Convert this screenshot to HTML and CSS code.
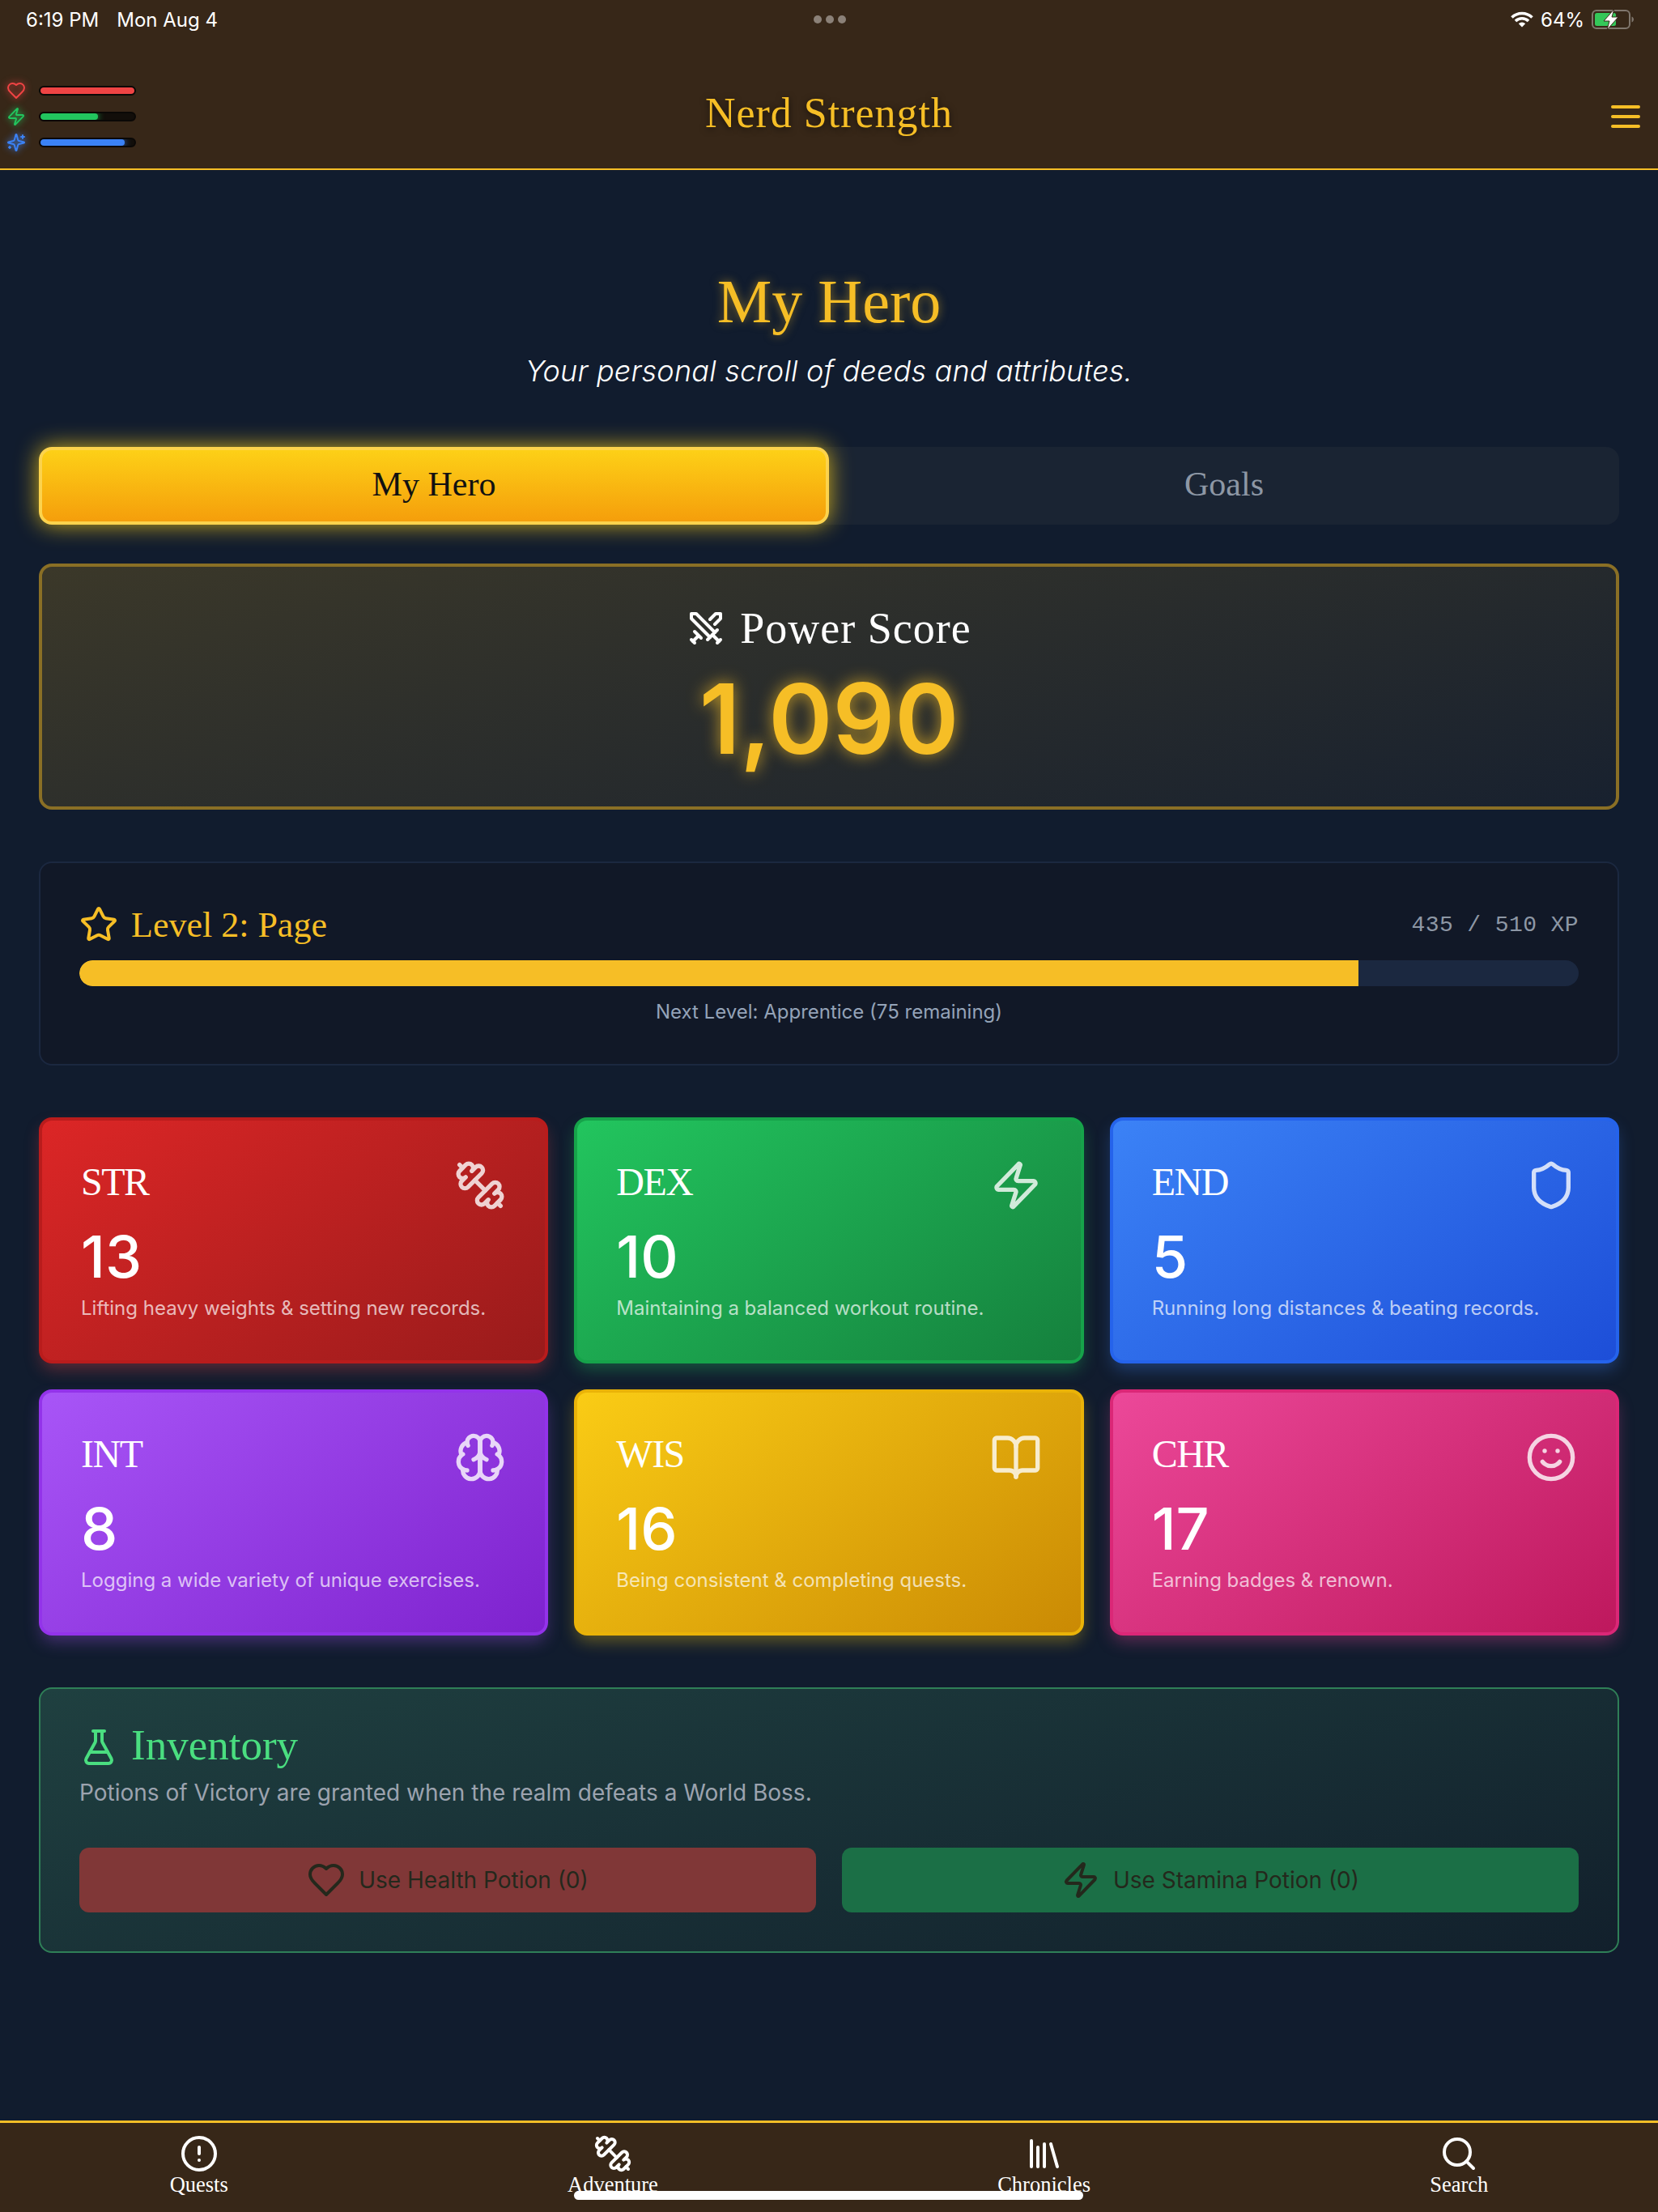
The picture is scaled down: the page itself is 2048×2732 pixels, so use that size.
FILE: index.html
```html
<!DOCTYPE html>
<html lang="en">
<head>
    <meta charset="UTF-8">
    <meta name="viewport" content="width=device-width, initial-scale=1.0">
    <title>Nerd Strength - My Hero</title>
    <link rel="stylesheet" href="styles.css">
</head>
<body>
<svg class="icon-defs" xmlns="http://www.w3.org/2000/svg">
    <symbol id="i-dumbbell" viewBox="0 0 24 24"><path d="M14.4 14.4 9.6 9.6"/><path d="M18.657 21.485a2 2 0 1 1-2.829-2.828l-1.767 1.768a2 2 0 1 1-2.829-2.829l6.364-6.364a2 2 0 1 1 2.829 2.829l-1.768 1.767a2 2 0 1 1 2.828 2.829z"/><path d="m21.5 21.5-1.4-1.4"/><path d="M3.9 3.9 2.5 2.5"/><path d="M6.404 12.768a2 2 0 1 1-2.829-2.829l1.768-1.767a2 2 0 1 1-2.828-2.829l2.828-2.828a2 2 0 1 1 2.829 2.828l1.767-1.768a2 2 0 1 1 2.829 2.829z"/></symbol>
    <symbol id="i-zap" viewBox="0 0 24 24"><path d="M4 14a1 1 0 0 1-.78-1.63l9.9-10.2a.5.5 0 0 1 .86.46l-1.92 6.02A1 1 0 0 0 13 10h7a1 1 0 0 1 .78 1.63l-9.9 10.2a.5.5 0 0 1-.86-.46l1.92-6.02A1 1 0 0 0 11 14z"/></symbol>
    <symbol id="i-shield" viewBox="0 0 24 24"><path d="M20 13c0 5-3.5 7.5-7.66 8.95a1 1 0 0 1-.67-.01C7.5 20.5 4 18 4 13V6a1 1 0 0 1 1-1c2 0 4.5-1.2 6.24-2.72a1.17 1.17 0 0 1 1.52 0C14.51 3.81 17 5 19 5a1 1 0 0 1 1 1z"/></symbol>
    <symbol id="i-brain" viewBox="0 0 24 24"><path d="M12 5a3 3 0 1 0-5.997.125 4 4 0 0 0-2.526 5.77 4 4 0 0 0 .556 6.588A4 4 0 1 0 12 18Z"/><path d="M12 5a3 3 0 1 1 5.997.125 4 4 0 0 1 2.526 5.77 4 4 0 0 1-.556 6.588A4 4 0 1 1 12 18Z"/><path d="M15 13a4.5 4.5 0 0 1-3-4 4.5 4.5 0 0 1-3 4"/><path d="M12 18V5"/><path d="M17.599 6.5a3 3 0 0 0 .399-1.375"/><path d="M6.003 5.125A3 3 0 0 0 6.401 6.5"/><path d="M3.477 10.896a4 4 0 0 1 .585-.396"/><path d="M19.938 10.5a4 4 0 0 1 .585.396"/><path d="M6 18a4 4 0 0 1-1.967-.516"/><path d="M19.967 17.484A4 4 0 0 1 18 18"/></symbol>
    <symbol id="i-book" viewBox="0 0 24 24"><path d="M12 7v14"/><path d="M3 18a1 1 0 0 1-1-1V4a1 1 0 0 1 1-1h5a4 4 0 0 1 4 4 4 4 0 0 1 4-4h5a1 1 0 0 1 1 1v13a1 1 0 0 1-1 1h-6a3 3 0 0 0-3 3 3 3 0 0 0-3-3z"/></symbol>
    <symbol id="i-smile" viewBox="0 0 24 24"><circle cx="12" cy="12" r="10"/><path d="M8 14s1.5 2 4 2 4-2 4-2"/><line x1="9" x2="9.01" y1="9" y2="9"/><line x1="15" x2="15.01" y1="9" y2="9"/></symbol>
    <symbol id="i-heart" viewBox="0 0 24 24"><path d="M19 14c1.49-1.46 3-3.21 3-5.5A5.5 5.5 0 0 0 16.5 3c-1.76 0-3 .5-4.5 2-1.5-1.5-2.74-2-4.5-2A5.5 5.5 0 0 0 2 8.5c0 2.3 1.5 4.05 3 5.5l7 7Z"/></symbol>
    <symbol id="i-sparkles" viewBox="0 0 24 24"><path d="M9.937 15.5A2 2 0 0 0 8.5 14.063l-6.135-1.582a.5.5 0 0 1 0-.962L8.5 9.936A2 2 0 0 0 9.937 8.5l1.582-6.135a.5.5 0 0 1 .963 0L14.063 8.5A2 2 0 0 0 15.5 9.937l6.135 1.581a.5.5 0 0 1 0 .964L15.5 14.063a2 2 0 0 0-1.437 1.437l-1.582 6.135a.5.5 0 0 1-.963 0z"/><path d="M20 3v4"/><path d="M22 5h-4"/><path d="M4 17v2"/><path d="M5 18H3"/></symbol>
    <symbol id="i-star" viewBox="0 0 24 24"><path d="M11.525 2.295a.53.53 0 0 1 .95 0l2.31 4.679a2.123 2.123 0 0 0 1.595 1.16l5.166.756a.53.53 0 0 1 .294.904l-3.736 3.638a2.123 2.123 0 0 0-.611 1.878l.882 5.14a.53.53 0 0 1-.771.56l-4.618-2.428a2.122 2.122 0 0 0-1.973 0L6.396 21.01a.53.53 0 0 1-.77-.56l.881-5.139a2.122 2.122 0 0 0-.611-1.879L2.16 9.795a.53.53 0 0 1 .294-.906l5.165-.755a2.122 2.122 0 0 0 1.597-1.16z"/></symbol>
    <symbol id="i-swords" viewBox="0 0 24 24"><polyline points="14.5 17.5 3 6 3 3 6 3 17.5 14.5"/><line x1="13" x2="19" y1="19" y2="13"/><line x1="16" x2="20" y1="16" y2="20"/><line x1="19" x2="21" y1="21" y2="19"/><polyline points="14.5 6.5 18 3 21 3 21 6 17.5 9.5"/><line x1="5" x2="9" y1="14" y2="18"/><line x1="7" x2="4" y1="17" y2="20"/><line x1="3" x2="5" y1="19" y2="21"/></symbol>
    <symbol id="i-flask" viewBox="0 0 24 24"><path d="M14 2v6a2 2 0 0 0 .245.96l5.51 10.08A2 2 0 0 1 18 22H6a2 2 0 0 1-1.755-2.96l5.51-10.08A2 2 0 0 0 10 8V2"/><path d="M6.453 15h11.094"/><path d="M8.5 2h7"/></symbol>
    <symbol id="i-alert" viewBox="0 0 24 24"><circle cx="12" cy="12" r="10"/><line x1="12" x2="12" y1="8" y2="12"/><line x1="12" x2="12.01" y1="16" y2="16"/></symbol>
    <symbol id="i-library" viewBox="0 0 24 24"><path d="m16 6 4 14"/><path d="M12 6v14"/><path d="M8 8v12"/><path d="M4 4v16"/></symbol>
    <symbol id="i-search" viewBox="0 0 24 24"><path d="m21 21-4.34-4.34"/><circle cx="11" cy="11" r="8"/></symbol>
    <symbol id="i-menu" viewBox="0 0 24 24"><path d="M4 6h16"/><path d="M4 12h16"/><path d="M4 18h16"/></symbol>
</svg>

<header class="top-header">
    <div class="status-bar">
        <div class="status-time"><span>6:19 PM</span><span>Mon Aug 4</span></div>
        <div class="status-dots"><i></i><i></i><i></i></div>
        <div class="status-right">
            <svg class="wifi" viewBox="0 0 28 20"><path d="M1.5 7.5a18 18 0 0 1 25 0M6 12a11.5 11.5 0 0 1 16 0"/><path class="wifi-dot" d="M14 19.5 9.8 15.3a6 6 0 0 1 8.4 0z"/></svg>
            <span>64%</span>
            <svg class="battery" viewBox="0 0 52 24">
                <rect class="battery-shell" x="1" y="1" width="46" height="22" rx="5"/>
                <rect class="battery-level" x="4" y="4" width="26" height="16" rx="2.5"/>
                <path class="battery-cap" d="M49.5 8.5c1.6.6 2.5 2 2.5 3.5s-.9 2.9-2.5 3.5z"/>
                <path class="battery-bolt" d="M28 -1 15 14h7l-3 11 14-16h-8z"/>
            </svg>
        </div>
    </div>
    <div class="header-row">
        <div class="vitals">
            <div class="vital vital-hp"><svg class="icon"><use href="#i-heart"/></svg><div class="vital-bar"><div class="vital-fill" style="width: 100%"></div></div></div>
            <div class="vital vital-sta"><svg class="icon"><use href="#i-zap"/></svg><div class="vital-bar"><div class="vital-fill" style="width: 61%"></div></div></div>
            <div class="vital vital-mana"><svg class="icon"><use href="#i-sparkles"/></svg><div class="vital-bar"><div class="vital-fill" style="width: 90%"></div></div></div>
        </div>
        <h1 class="app-title">Nerd Strength</h1>
        <button class="menu-btn"><svg class="icon"><use href="#i-menu"/></svg></button>
    </div>
</header>

<main class="page">
    <h2 class="page-title">My Hero</h2>
    <p class="page-sub">Your personal scroll of deeds and attributes.</p>

    <div class="tabs">
        <button class="tab tab-active">My Hero</button>
        <button class="tab">Goals</button>
    </div>

    <section class="power-card">
        <h3 class="power-title"><svg class="icon"><use href="#i-swords"/></svg>Power Score</h3>
        <div class="power-value">1,090</div>
    </section>

    <section class="level-card">
        <div class="level-head">
            <h3 class="level-title"><svg class="icon"><use href="#i-star"/></svg>Level 2: Page</h3>
            <span class="level-xp">435 / 510 XP</span>
        </div>
        <div class="level-track"><div class="level-fill" style="width: 85.3%"></div></div>
        <p class="level-next">Next Level: Apprentice (75 remaining)</p>
    </section>

    <section class="stats">
        <div class="stat stat-str">
            <div class="stat-head"><span class="stat-name">STR</span><svg class="icon"><use href="#i-dumbbell"/></svg></div>
            <div class="stat-value">13</div>
            <p class="stat-desc">Lifting heavy weights &amp; setting new records.</p>
        </div>
        <div class="stat stat-dex">
            <div class="stat-head"><span class="stat-name">DEX</span><svg class="icon"><use href="#i-zap"/></svg></div>
            <div class="stat-value">10</div>
            <p class="stat-desc">Maintaining a balanced workout routine.</p>
        </div>
        <div class="stat stat-end">
            <div class="stat-head"><span class="stat-name">END</span><svg class="icon"><use href="#i-shield"/></svg></div>
            <div class="stat-value">5</div>
            <p class="stat-desc">Running long distances &amp; beating records.</p>
        </div>
        <div class="stat stat-int">
            <div class="stat-head"><span class="stat-name">INT</span><svg class="icon"><use href="#i-brain"/></svg></div>
            <div class="stat-value">8</div>
            <p class="stat-desc">Logging a wide variety of unique exercises.</p>
        </div>
        <div class="stat stat-wis">
            <div class="stat-head"><span class="stat-name">WIS</span><svg class="icon"><use href="#i-book"/></svg></div>
            <div class="stat-value">16</div>
            <p class="stat-desc">Being consistent &amp; completing quests.</p>
        </div>
        <div class="stat stat-chr">
            <div class="stat-head"><span class="stat-name">CHR</span><svg class="icon"><use href="#i-smile"/></svg></div>
            <div class="stat-value">17</div>
            <p class="stat-desc">Earning badges &amp; renown.</p>
        </div>
    </section>

    <section class="inventory">
        <h3 class="inventory-title"><svg class="icon"><use href="#i-flask"/></svg>Inventory</h3>
        <p class="inventory-text">Potions of Victory are granted when the realm defeats a World Boss.</p>
        <div class="inventory-actions">
            <button class="potion potion-health" disabled><svg class="icon"><use href="#i-heart"/></svg>Use Health Potion (0)</button>
            <button class="potion potion-stamina" disabled><svg class="icon"><use href="#i-zap"/></svg>Use Stamina Potion (0)</button>
        </div>
    </section>
</main>

<nav class="bottom-nav">
    <a class="nav-item"><svg class="icon"><use href="#i-alert"/></svg><span>Quests</span></a>
    <a class="nav-item"><svg class="icon"><use href="#i-dumbbell"/></svg><span>Adventure</span></a>
    <a class="nav-item"><svg class="icon"><use href="#i-library"/></svg><span>Chronicles</span></a>
    <a class="nav-item"><svg class="icon"><use href="#i-search"/></svg><span>Search</span></a>
    <div class="home-indicator"></div>
</nav>
</body>
</html>
```

FILE: styles.css
```css
* {
    box-sizing: border-box;
}
body {
    margin: 0;
    min-height: 2732px;
    display: flex;
    flex-direction: column;
    background-color: #111c2e;
    color: #fff;
    font-family: Inter, "Noto Sans", sans-serif;
}
h1, h2, h3, p {
    margin: 0;
    font-weight: 400;
}
.icon-defs {
    display: none;
}
.icon {
    width: 48px;
    height: 48px;
    flex: none;
    fill: none;
    stroke: currentColor;
    stroke-width: 2;
    stroke-linecap: round;
    stroke-linejoin: round;
}

/* header */
.top-header {
    height: 210px;
    background-color: #372718;
    border-bottom: 2px solid #f6be26;
}
.status-bar {
    height: 48px;
    padding: 0 30px 0 32px;
    display: grid;
    grid-template-columns: 1fr auto 1fr;
    align-items: center;
    font-size: 24px;
}
.status-time {
    display: flex;
    gap: 22px;
}
.status-dots {
    display: flex;
    gap: 5px;
}
.status-dots i {
    width: 10px;
    height: 10px;
    border-radius: 50%;
    background-color: #8b8178;
}
.status-right {
    display: flex;
    justify-content: flex-end;
    align-items: center;
    gap: 9px;
}
.wifi {
    width: 28px;
    height: 20px;
    fill: none;
    stroke: #fff;
    stroke-width: 3.6;
}
.wifi-dot {
    fill: #fff;
    stroke: none;
}
.battery {
    width: 52px;
    height: 24px;
    overflow: visible;
}
.battery-shell {
    fill: none;
    stroke: #7f766d;
    stroke-width: 2;
}
.battery-level {
    fill: #34c759;
}
.battery-cap {
    fill: #7f766d;
}
.battery-bolt {
    fill: #fff;
    stroke: #372718;
    stroke-width: 1;
}
.header-row {
    height: 160px;
    padding: 32px 8px 0;
    display: grid;
    grid-template-columns: 1fr auto 1fr;
    align-items: center;
}
.vitals {
    display: flex;
    flex-direction: column;
    gap: 8px;
}
.vital {
    display: flex;
    align-items: center;
    gap: 16px;
}
.vital .icon {
    width: 24px;
    height: 24px;
    filter: drop-shadow(0 0 4px currentColor);
}
.vital-bar {
    width: 120px;
    height: 12px;
    background-color: #120e0a;
    border: 2px solid #0a0806;
    border-radius: 6px;
    overflow: hidden;
}
.vital-fill {
    height: 100%;
    border-radius: 4px;
    background-color: currentColor;
    box-shadow: 0 0 8px currentColor;
}
.vital-hp { color: #ef4444; }
.vital-sta { color: #22c55e; }
.vital-mana { color: #3b82f6; }
.app-title {
    margin-top: -8px;
    font-family: "Liberation Serif", serif;
    font-size: 52px;
    line-height: 56px;
    letter-spacing: 1px;
    color: #f6be26;
    text-shadow: 0 2px 8px rgba(0, 0, 0, 0.6);
}
.menu-btn {
    justify-self: end;
    height: 48px;
    margin-right: 8px;
    padding: 0;
    background: none;
    border: none;
    color: #f6be26;
}

/* main */
.page {
    flex: 1;
    padding: 122px 48px 0;
}
.page-title {
    font-family: "Liberation Serif", serif;
    font-size: 76px;
    line-height: 80px;
    text-align: center;
    color: #f6be26;
    text-shadow: 0 0 12px rgba(246, 190, 38, 0.5);
}
.page-sub {
    margin-top: 18px;
    font-size: 36px;
    font-weight: 300;
    line-height: 56px;
    letter-spacing: 0.2px;
    font-style: italic;
    text-align: center;
}
.tabs {
    margin-top: 66px;
    display: grid;
    grid-template-columns: 1fr 1fr;
    background-color: #1a2433;
    border-radius: 16px;
}
.tab {
    height: 96px;
    padding-bottom: 6px;
    font-family: "Liberation Serif", serif;
    font-size: 42px;
    color: #8d97a5;
    background: none;
    border: none;
    border-radius: 16px;
}
.tab-active {
    color: #111;
    background: linear-gradient(180deg, #fdd017, #f59e0b);
    border: 4px solid #fcd34d;
    box-shadow: 0 0 28px rgba(253, 208, 23, 0.8);
}
.power-card {
    margin-top: 48px;
    height: 304px;
    padding: 48px;
    border: 4px solid #8a6f25;
    border-radius: 16px;
    background: linear-gradient(165deg, #3b3829, #18212f);
    text-align: center;
}
.power-title {
    height: 56px;
    margin-bottom: 24px;
    display: flex;
    justify-content: center;
    align-items: center;
    gap: 18px;
    font-family: "Liberation Serif", serif;
    font-size: 54px;
    letter-spacing: 1px;
}
.power-value {
    font-size: 120px;
    line-height: 120px;
    font-weight: 600;
    color: #f6be26;
    text-shadow: 0 0 20px rgba(246, 190, 38, 0.75);
}
.level-card {
    margin-top: 64px;
    padding: 48px;
    background-color: #111827;
    border: 2px solid #1b2840;
    border-radius: 16px;
}
.level-head {
    height: 56px;
    display: flex;
    justify-content: space-between;
    align-items: center;
}
.level-title {
    display: flex;
    align-items: center;
    gap: 16px;
    font-family: "Liberation Serif", serif;
    font-size: 44px;
    color: #f6be26;
}
.level-xp {
    font-family: "Liberation Mono", monospace;
    font-size: 28px;
    letter-spacing: 0.4px;
    color: #8d97a5;
}
.level-track {
    margin-top: 16px;
    height: 32px;
    background-color: #1b2840;
    border-radius: 16px;
    overflow: hidden;
}
.level-fill {
    height: 100%;
    background-color: #f6be26;
    border-radius: 16px 0 0 16px;
}
.level-next {
    margin-top: 16px;
    font-size: 24px;
    line-height: 32px;
    text-align: center;
    color: #94a3b8;
}

/* stat cards */
.stats {
    margin-top: 64px;
    display: grid;
    grid-template-columns: repeat(3, 1fr);
    gap: 32px;
}
.stat {
    height: 304px;
    padding: 48px;
    border: 4px solid;
    border-radius: 16px;
}
.stat-head {
    height: 64px;
    display: flex;
    justify-content: space-between;
    align-items: flex-start;
}
.stat-head .icon {
    width: 64px;
    height: 64px;
    opacity: 0.8;
}
.stat-name {
    font-family: "Liberation Serif", serif;
    font-size: 48px;
    line-height: 56px;
    letter-spacing: -1.5px;
}
.stat-value {
    margin-top: 16px;
    font-size: 72px;
    line-height: 80px;
    font-weight: 500;
}
.stat-desc {
    margin-top: 8px;
    font-size: 24px;
    line-height: 32px;
    color: rgba(255, 255, 255, 0.7);
}
.stat-str { background: linear-gradient(145deg, #dc2626, #991b1b); border-color: #b91c1c; box-shadow: 0 10px 20px -3px rgba(239, 68, 68, 0.35); }
.stat-dex { background: linear-gradient(145deg, #22c55e, #15803d); border-color: #16a34a; box-shadow: 0 10px 20px -3px rgba(34, 197, 94, 0.35); }
.stat-end { background: linear-gradient(145deg, #3b82f6, #1d4ed8); border-color: #2563eb; box-shadow: 0 10px 20px -3px rgba(59, 130, 246, 0.35); }
.stat-int { background: linear-gradient(145deg, #a855f7, #7e22ce); border-color: #9333ea; box-shadow: 0 10px 20px -3px rgba(168, 85, 247, 0.35); }
.stat-wis { background: linear-gradient(145deg, #facc15, #ca8a04); border-color: #eab308; box-shadow: 0 10px 20px -3px rgba(250, 204, 21, 0.35); }
.stat-chr { background: linear-gradient(145deg, #ec4899, #be185d); border-color: #db2777; box-shadow: 0 10px 20px -3px rgba(236, 72, 153, 0.35); }

/* inventory */
.inventory {
    margin-top: 64px;
    padding: 48px;
    border: 2px solid #2f7f57;
    border-radius: 16px;
    background: linear-gradient(165deg, #1f4040, #12202c);
}
.inventory-title {
    height: 48px;
    padding-bottom: 6px;
    display: flex;
    align-items: center;
    gap: 16px;
    font-family: "Liberation Serif", serif;
    font-size: 53px;
    color: #4ade80;
}
.inventory-title .icon {
    margin-top: 6px;
}
.inventory-text {
    margin-top: 12px;
    font-size: 28px;
    line-height: 40px;
    color: #9ca3af;
}
.inventory-actions {
    margin-top: 48px;
    display: grid;
    grid-template-columns: 1fr 1fr;
    gap: 32px;
}
.potion {
    height: 80px;
    display: flex;
    justify-content: center;
    align-items: center;
    gap: 16px;
    border: none;
    border-radius: 12px;
    font-family: Inter, sans-serif;
    font-size: 28px;
    color: #24281c;
}
.potion-health { background-color: #803737; }
.potion-stamina { background-color: #1b6f46; }

/* bottom nav */
.bottom-nav {
    position: relative;
    height: 113px;
    padding-top: 14px;
    display: flex;
    justify-content: space-around;
    background-color: #372718;
    border-top: 3px solid #f6be26;
}
.nav-item {
    display: flex;
    flex-direction: column;
    align-items: center;
    font-family: "Liberation Serif", serif;
    font-size: 26.5px;
    line-height: 28px;
    color: #fff;
}
.home-indicator {
    position: absolute;
    left: 709px;
    bottom: 15px;
    width: 629px;
    height: 11px;
    background-color: #fff;
    border-radius: 6px;
}
```
